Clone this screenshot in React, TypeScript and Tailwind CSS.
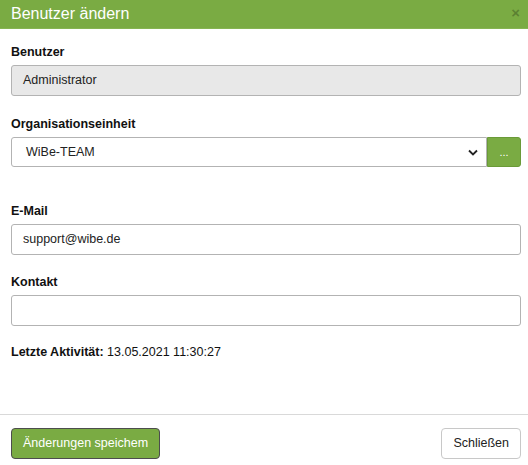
import React from "react";

const fieldClass =
  "h-[31px] w-full rounded-[3px] border border-[#b3b3b3] px-[11px] flex items-center text-[12.5px] text-[#222]";

function Label({ children }: { children: React.ReactNode }) {
  return (
    <div className="h-[18px] leading-[18px] mb-[4px] text-[12.5px] font-bold text-[#111]">
      {children}
    </div>
  );
}

function App() {
  return (
    <div
      className="w-[528px] h-[465px] bg-white flex flex-col"
      style={{ fontFamily: '"Liberation Sans", Arial, sans-serif' }}
    >
      <div className="h-[29px] bg-[#7aab43] border-b border-[#86b452] pl-[11px] pr-[8px] flex items-center justify-between">
        <span className="text-[16px] text-white leading-none">Benutzer ändern</span>
        <span className="text-[15px] font-bold text-black/25 leading-none -mt-[4px]">×</span>
      </div>

      <div className="flex-1 pl-[11px] pr-[7px] pt-[14px]">
        <Label>Benutzer</Label>
        <div className={`${fieldClass} bg-[#e8e8e8]`}>Administrator</div>

        <div className="mt-[19px]">
          <Label>Organisationseinheit</Label>
          <div className="flex">
            <div className="h-[30px] flex-1 border border-[#b3b3b3] rounded-l-[3px] pl-[14px] pr-[8px] flex items-center justify-between text-[12.5px] text-[#222]">
              <span>WiBe-TEAM</span>
              <svg width="10" height="7" viewBox="0 0 10 7">
                <path d="M1 1.5 L5 5.5 L9 1.5" fill="none" stroke="#222" strokeWidth="1.8" />
              </svg>
            </div>
            <button className="h-[30px] w-[34px] bg-[#7aab43] border border-[#6a9a38] rounded-r-[3px] text-white text-[11px] leading-none">
              ...
            </button>
          </div>
        </div>

        <div className="mt-[35px]">
          <Label>E-Mail</Label>
          <div className={fieldClass}>support@wibe.de</div>
        </div>

        <div className="mt-[18px]">
          <Label>Kontakt</Label>
          <div className={fieldClass}></div>
        </div>

        <div className="mt-[17px] h-[18px] leading-[18px] text-[12.5px] text-[#111]">
          <span className="font-bold">Letzte Aktivität:</span> 13.05.2021 11:30:27
        </div>
      </div>

      <div className="border-t border-[#d9d9d9] pl-[11px] pr-[7px] pt-[13px] pb-[6px] flex items-start justify-between">
        <button className="h-[31px] px-[11px] bg-[#7aab43] border border-[#4d4d4d] rounded-[4px] text-white text-[12.5px]">
          Änderungen speichem
        </button>
        <button className="h-[31px] px-[11px] bg-white border border-[#c8c8c8] rounded-[4px] text-[#222] text-[12.5px]">
          Schließen
        </button>
      </div>
    </div>
  );
}

export default App;
